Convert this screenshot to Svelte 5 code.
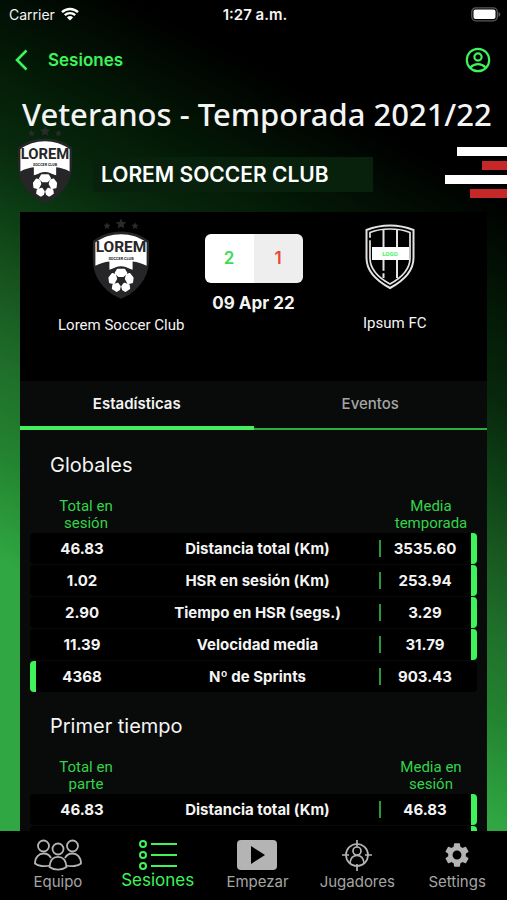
<script>
  let activeTab = $state('Estadísticas');

  const tabs = ['Estadísticas', 'Eventos'];

  // best: which side has the better value
  const sections = [
    {
      title: 'Globales',
      left: ['Total en', 'sesión'],
      right: ['Media', 'temporada'],
      rows: [
        { own: '46.83', label: 'Distancia total (Km)', avg: '3535.60', best: 'right' },
        { own: '1.02', label: 'HSR en sesión (Km)', avg: '253.94', best: 'right' },
        { own: '2.90', label: 'Tiempo en HSR (segs.)', avg: '3.29', best: 'right' },
        { own: '11.39', label: 'Velocidad media', avg: '31.79', best: 'right' },
        { own: '4368', label: 'Nº de Sprints', avg: '903.43', best: 'left' }
      ]
    },
    {
      title: 'Primer tiempo',
      left: ['Total en', 'parte'],
      right: ['Media en', 'sesión'],
      rows: [
        { own: '46.83', label: 'Distancia total (Km)', avg: '46.83', best: 'right' },
        { own: '', label: '', avg: '', best: 'right' }
      ]
    }
  ];
</script>

{#snippet lorem(size)}
  <svg class="crest {size}" viewBox="0 0 60 84" role="img" aria-label="Lorem Soccer Club">
    <g fill="#2b2b2d">
      <path d="M30 0l1.6 3.6 3.9.4-2.9 2.6.8 3.9-3.4-2-3.4 2 .8-3.9L24.5 4l3.9-.4z" />
      <path d="M15.500 4l1.100 2.400 2.600.3-2 1.700.6 2.600-2.300-1.300-2.300 1.300.6-2.600-2-1.700 2.600-.3z" />
      <path d="M44.500 4l1.100 2.400 2.600.3-2 1.700.6 2.600-2.300-1.300-2.300 1.300.6-2.600-2-1.700 2.600-.3z" />
    </g>
    <path d="M30 13.500C41 13.500 51 17 59 23.500C59 32 60 42 58 52C55 66 43 78 30 83C17 78 5 66 2 52C0 42 1 32 1 23.500C9 17 19 13.500 30 13.500z" fill="#262628" />
    <path d="M30 16.500C40 16.500 49 19.500 56.500 25V49C52 46.500 47 45 42 44.500V53C34 50.500 26 50.500 18 53V44.500C13 45 8 46.500 3.500 49V25C11 19.500 20 16.500 30 16.500z" fill="#fff" />
    <text x="30" y="35" font-size="16" class="crest-name">LOREM</text>
    <text x="30" y="43" font-size="4" class="crest-sub">SOCCER CLUB</text>
    <circle cx="30" cy="64" r="14.500" fill="#262628" />
    <g fill="#fff" stroke="#fff" stroke-width="2" stroke-linejoin="round">
      <path d="M26.500 53h7l2 3.500-3 3h-5l-3-3z" />
      <path d="M39 57.500l3 4-.5 4.500-4 1-2.500-4.500 1-4z" />
      <path d="M21 57.500l-3 4 .5 4.500 4 1 2.500-4.500-1-4z" />
      <path d="M33.500 67.500l4.500 1.500.5 3.500-4 2.500-2.500-1.500-.8-3z" />
      <path d="M26.500 67.500l-4.500 1.500-.5 3.500 4 2.500 2.500-1.500.8-3z" />
    </g>
  </svg>
{/snippet}

<div class="app">
  <div class="status">
    <span class="carrier">
      Carrier
      <svg width="18" height="14" viewBox="0 0 18 14" fill="none" stroke="#fff" stroke-width="2.400">
        <path d="M1 5.200a11.500 11.500 0 0 1 16 0M3.800 8.200a7.500 7.500 0 0 1 10.400 0" />
        <path d="M9 13.500L5.900 10.400a4.500 4.500 0 0 1 6.200 0z" fill="#fff" stroke="none" />
      </svg>
    </span>
    <span class="clock">1:27 a.m.</span>
    <svg class="battery" width="30" height="15" viewBox="0 0 30 15">
      <rect x=".8" y=".8" width="25.500" height="13" rx="4" fill="none" stroke="#5a5a5a" stroke-width="1.300" />
      <rect x="2.500" y="2.500" width="22" height="9.600" rx="2" fill="#fff" />
      <path d="M27.500 5v4.800c2.400-.8 2.400-4 0-4.800z" fill="#5a5a5a" />
    </svg>
  </div>

  <header class="top">
    <button class="back">
      <svg width="14" height="22" viewBox="0 0 14 22" fill="none" stroke="#3ef45a" stroke-width="2.600">
        <path d="M12.500 1.500L3 11l9.500 9.500" />
      </svg>
      Sesiones
    </button>
    <button class="profile" aria-label="Perfil">
      <svg width="26" height="26" viewBox="0 0 26 26" fill="none" stroke="#3ef45a" stroke-width="2.200">
        <circle cx="13" cy="13" r="11.200" />
        <circle cx="13" cy="10" r="3.600" />
        <path d="M5.500 20.500c4-4.500 11-4.500 15 0" />
      </svg>
    </button>
  </header>

  <h1>Veteranos - Temporada 2021/22</h1>

  <div class="club">
    {@render lorem('small')}
    <div class="club-name">LOREM SOCCER CLUB</div>
    <div class="stripes">
      <i></i><i></i><i></i><i></i>
    </div>
  </div>

  <main>
    <section class="match">
      <div class="team own-team">
        {@render lorem('large')}
        <span>Lorem Soccer Club</span>
      </div>
      <div class="result">
        <div class="score">
          <span class="home">2</span>
          <span class="away">1</span>
        </div>
        <time datetime="2022-04-09">09 Apr 22</time>
      </div>
      <div class="team">
        <svg class="crest shield" viewBox="0 0 50 66" role="img" aria-label="Ipsum FC" fill="none" stroke="#e4e4e4">
          <path d="M25 1.500C33 1.500 41 3 48.500 6V34C48.500 47 38 57 25 64C12 57 1.500 47 1.500 34V6C9 3 17 1.500 25 1.500z" stroke-width="2" />
          <path d="M25 5C32 5 39 6 45 8.500V34C45 45 36 54 25 60C14 54 5 45 5 34V8.500C11 6 18 5 25 5z" stroke-width="1.700" />
          <path d="M18.500 6v48M32 6v48" stroke-width="2" />
          <path d="M3.500 15h4M16.500 48h4" stroke="#000" stroke-width="2.500" />
          <rect x="7" y="23" width="37" height="13" fill="#fff" stroke="none" />
          <text x="25" y="32" font-size="6" class="shield-name">LOGO</text>
        </svg>
        <span>Ipsum FC</span>
      </div>
    </section>

    <div class="tabs" role="tablist">
      {#each tabs as tab}
        <button role="tab" aria-selected={activeTab === tab} class:active={activeTab === tab} onclick={() => (activeTab = tab)}>
          {tab}
        </button>
      {/each}
    </div>

    {#each sections as section}
      <section class="stats">
        <h2>{section.title}</h2>
        <table>
          <thead>
            <tr>
              <th class="side">{section.left[0]}<br />{section.left[1]}</th>
              <td></td>
              <th class="side">{section.right[0]}<br />{section.right[1]}</th>
            </tr>
          </thead>
          <tbody>
            {#each section.rows as row}
              <tr>
                <td class="own" class:best={row.best === 'left'}>{row.own}</td>
                <th class="label" scope="row">{row.label}</th>
                <td class="avg" class:best={row.best === 'right'}>{row.avg}</td>
              </tr>
            {/each}
          </tbody>
        </table>
      </section>
    {/each}
  </main>

  <nav>
    <a href="#equipo">
      <svg width="48" height="32" viewBox="0 0 48 32" fill="none" stroke="#b4b4b4" stroke-width="1.800">
        <circle cx="9.500" cy="7" r="5.500" />
        <circle cx="38.500" cy="7" r="5.500" />
        <circle cx="24" cy="10" r="5.500" />
        <path d="M15.500 26.500C11 28 4 27 1 24.500C1 18 5 14.500 9.500 14.500C13 14.500 15.500 16 17 19M32.500 26.500C37 28 44 27 47 24.500C47 18 43 14.500 38.500 14.500C35 14.500 32.500 16 31 19" />
        <path d="M15.500 28C16 21 19.500 17.800 24 17.800S32 21 32.500 28C28 31.500 20 31.500 15.500 28z" />
      </svg>
      Equipo
    </a>
    <a href="#sesiones" class="current">
      <svg width="40" height="32" viewBox="0 0 40 32" fill="none" stroke="#3ef45a" stroke-width="2">
        <circle cx="5" cy="5" r="3" />
        <circle cx="5" cy="16" r="3" />
        <circle cx="5" cy="27" r="3" />
        <path d="M13 5h26M13 16h26M13 27h26" />
      </svg>
      Sesiones
    </a>
    <a href="#empezar">
      <svg width="42" height="32" viewBox="0 0 42 32">
        <rect x="1" y="1" width="40" height="30" rx="4" fill="#b4b4b4" />
        <path d="M15 7v18l14-9z" fill="#000" />
      </svg>
      Empezar
    </a>
    <a href="#jugadores">
      <svg width="32" height="32" viewBox="0 0 32 32" fill="none" stroke="#b4b4b4" stroke-width="1.700">
        <circle cx="16" cy="16" r="11" />
        <circle cx="16" cy="12" r="4" />
        <path d="M9 24c.5-5 3.500-7.500 7-7.500s6.500 2.500 7 7.500M16 1v7M16 25v7M1 16h7M24 16h7" />
      </svg>
      Jugadores
    </a>
    <a href="#settings">
      <svg width="30" height="32" viewBox="0 0 24 26">
        <path fill="#b4b4b4" d="M19.140 13.940c.04-.3.060-.61.060-.94s-.02-.64-.07-.94l2.030-1.580a.49.490 0 0 0 .12-.61l-1.920-3.320a.49.490 0 0 0-.59-.22l-2.390.96a7 7 0 0 0-1.620-.94l-.36-2.540a.48.480 0 0 0-.48-.41h-3.840a.47.470 0 0 0-.47.410l-.36 2.540c-.59.240-1.130.57-1.620.94l-2.390-.96a.48.480 0 0 0-.59.220L2.740 9.870a.48.480 0 0 0 .12.610l2.030 1.580a7 7 0 0 0 0 1.880l-2.030 1.580a.49.490 0 0 0-.12.610l1.920 3.320c.12.220.37.290.59.220l2.390-.96c.5.380 1.030.7 1.620.94l.36 2.540c.05.240.24.410.48.410h3.840c.24 0 .44-.17.470-.41l.36-2.540a7 7 0 0 0 1.620-.94l2.390.96c.22.080.47 0 .59-.22l1.920-3.320a.47.470 0 0 0-.12-.61zM12 16.600a3.600 3.600 0 1 1 0-7.200 3.600 3.600 0 0 1 0 7.200z" />
      </svg>
      Settings
    </a>
  </nav>
</div>

<style>
  :global(body) {
    background: #000;
  }

  .app {
    display: flex;
    flex-direction: column;
    height: 100vh;
    overflow: hidden;
    color: #f4f4f4;
    font-family: Inter, Roboto, sans-serif;
    background: linear-gradient(
      208deg,
      #000 17%,
      #041d07 29%,
      #08290d 35%,
      #0d3f15 41%,
      #17551f 47%,
      #1f6e2a 54%,
      #238430 62%,
      #30a742 71%
    );
  }

  button {
    padding: 0;
    border: 0;
    background: none;
    font: inherit;
    color: inherit;
    cursor: pointer;
  }

  .status {
    display: grid;
    grid-template-columns: 1fr auto 1fr;
    align-items: center;
    height: 28px;
    padding: 0 6px 0 9px;
    font-size: 14px;
  }

  .carrier {
    display: flex;
    align-items: center;
    gap: 6px;
  }

  .clock {
    font-size: 15px;
    font-weight: 600;
  }

  .battery {
    justify-self: end;
  }

  .top {
    display: flex;
    justify-content: space-between;
    align-items: center;
    height: 64px;
    padding: 0 16px 0 14px;
  }

  .back {
    display: flex;
    align-items: center;
    gap: 20px;
    color: #3ef45a;
    font-size: 17px;
    font-weight: 600;
  }

  .profile,
  .top svg {
    display: block;
  }

  h1 {
    margin: 0;
    padding-left: 22px;
    font-family: "Noto Sans", sans-serif;
    font-size: 31px;
    font-weight: 500;
    line-height: 44px;
    white-space: nowrap;
  }

  .club {
    display: flex;
    align-items: center;
    height: 76px;
    padding-left: 17px;
  }

  .crest {
    display: block;
    flex: none;
  }

  .small {
    width: 56px;
    height: 78px;
    margin-top: -18px;
  }

  .large {
    width: 58px;
    height: 82px;
  }

  .shield {
    width: 50px;
    height: 66px;
    margin: 6px 10px 8px 0;
  }

  .crest-name,
  .crest-sub,
  .shield-name {
    font-family: Roboto, sans-serif;
    font-weight: 700;
    text-anchor: middle;
    fill: #262628;
  }

  .shield-name {
    fill: #3ef45a;
    stroke: none;
  }

  .club-name {
    flex: 0 1 280px;
    box-sizing: border-box;
    margin-left: 20px;
    padding: 0 8px;
    background: #08210d;
    color: #fff;
    font-size: 21px;
    font-weight: 600;
    line-height: 35px;
    white-space: nowrap;
  }

  .stripes {
    display: grid;
    gap: 5px;
    width: 62px;
    margin-left: auto;
    padding-bottom: 4px;
  }

  .stripes i {
    height: 9px;
    margin-left: 12px;
    background: #fff;
  }

  .stripes i:nth-child(2) {
    margin-left: 37px;
  }

  .stripes i:nth-child(3) {
    margin-left: 0;
  }

  .stripes i:nth-child(4) {
    margin-left: 25px;
  }

  .stripes i:nth-child(even) {
    background: #c62828;
  }

  main {
    flex: 1;
    min-height: 0;
    overflow: hidden;
    margin: 0 20px;
    background: #080b0a;
  }

  .match {
    display: grid;
    grid-template-columns: 1fr 98px 1fr;
    height: 169px;
    background: #000;
  }

  .team {
    display: flex;
    flex-direction: column;
    align-items: center;
    gap: 16px;
    padding-top: 6px;
    font-family: Roboto, sans-serif;
    font-size: 15px;
    line-height: 18px;
  }

  .own-team {
    padding-left: 18px;
  }

  .result {
    padding-top: 22px;
    text-align: center;
  }

  .score {
    display: grid;
    grid-template-columns: 1fr 1fr;
    overflow: hidden;
    border-radius: 6px;
    font-size: 17px;
    font-weight: 600;
    line-height: 49px;
  }

  .home {
    background: #fff;
    color: #3edb55;
  }

  .away {
    background: #eee;
    color: #ee4438;
  }

  time {
    display: block;
    font-size: 17px;
    font-weight: 700;
    line-height: 40px;
    white-space: nowrap;
  }

  .tabs {
    display: flex;
    height: 49px;
    margin-bottom: 2px;
  }

  .tabs button {
    flex: 1;
    box-sizing: border-box;
    padding-bottom: 2px;
    border-bottom: 2px solid #2fae40;
    color: #a5a5a5;
    font-size: 15px;
    font-weight: 500;
  }

  .tabs .active {
    padding-bottom: 0;
    border-bottom: 4px solid #45ee5c;
    color: #f4f4f4;
    font-weight: 600;
  }

  .stats {
    padding: 19px 10px 0;
  }

  h2 {
    margin: 0 20px 15px;
    font-size: 20px;
    font-weight: 400;
    line-height: 28px;
  }

  table {
    width: 100%;
    table-layout: fixed;
    border-spacing: 0 1px;
    text-align: center;
    font-size: 15px;
    font-weight: 700;
  }

  th,
  td {
    padding: 0;
  }

  .side {
    box-sizing: border-box;
    width: 104px;
    padding: 3px 0 0 8px;
    color: #35d34b;
    font-family: Roboto, sans-serif;
    font-size: 15px;
    font-weight: 400;
    line-height: 17px;
  }

  .side:last-child {
    padding-left: 12px;
  }

  tbody td,
  tbody th {
    height: 31px;
    background: #000;
  }

  .own {
    padding-right: 6px;
    border-left: 6px solid transparent;
    border-radius: 4px 0 0 4px;
  }

  .label {
    padding-left: 8px;
  }

  tbody .avg {
    padding-left: 6px;
    border-right: 6px solid transparent;
    border-radius: 0 4px 4px 0;
    background: linear-gradient(#279a38, #279a38) 6px center / 2px 17px no-repeat #000;
  }

  tbody .best {
    border-color: #3ef45a;
  }

  nav {
    display: grid;
    grid-template-columns: repeat(5, 1fr);
    height: 69px;
    padding-left: 8px;
    background: #000;
  }

  nav a {
    display: flex;
    flex-direction: column;
    align-items: center;
    padding-top: 8px;
    color: #a5a5a5;
    font-size: 15px;
    line-height: 22px;
    text-decoration: none;
  }

  nav .current {
    color: #3ef45a;
    font-size: 17px;
    line-height: 18px;
  }
</style>
